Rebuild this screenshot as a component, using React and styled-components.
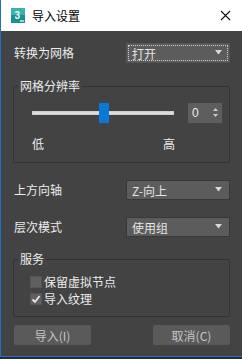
import React, { useState } from 'react';
import styled, { createGlobalStyle } from 'styled-components';

const GlobalStyle = createGlobalStyle`
    html, body {
        margin: 0;
        padding: 0;
        background: #2b2b2b;
    }
    body {
        font-family: "Noto Sans CJK SC", "Liberation Sans", sans-serif;
    }
`

const App = () => {
    const [keepNodes, setKeepNodes] = useState(false)
    const [textures, setTextures] = useState(true)

    return (<Window>
        <GlobalStyle />
        <TitleBar>
            <AppIcon>
                <svg width="14" height="15" viewBox="0 0 14 15">
                    <rect x="0" y="0" width="14" height="15" fill="#1d8f92" />
                    <rect x="0" y="0" width="14" height="7" fill="#3bb2ac" />
                    <text x="3.5" y="11" fontSize="10" fontWeight="bold" fill="#e8f4f4" fontFamily="Liberation Sans">3</text>
                    <rect x="9" y="12" width="4" height="2" fill="#9fd6d4" />
                </svg>
            </AppIcon>
            <Title>导入设置</Title>
            <Close>
                <svg width="11" height="11" viewBox="0 0 11 11">
                    <path d="M1 1 L10 10 M10 1 L1 10" stroke="#111" strokeWidth="1.1" />
                </svg>
            </Close>
        </TitleBar>
        <Body>
            <Row>
                <Label>转换为网格</Label>
                <Select focused>打开<Arrow /></Select>
            </Row>
            <Group>
                <Legend>网格分辨率</Legend>
                <SliderRow>
                    <Track>
                        <Thumb style={{ left: '66px' }} />
                    </Track>
                    <Spinner>
                        0
                        <SpinArrows>
                            <svg width="5" height="9" viewBox="0 0 5 9">
                                <path d="M0 3 L2.5 0 L5 3 Z M0 6 L2.5 9 L5 6 Z" fill="#c8c8c8" />
                            </svg>
                        </SpinArrows>
                    </Spinner>
                </SliderRow>
                <Ticks>
                    <span>低</span>
                    <span>高</span>
                </Ticks>
            </Group>
            <Row top={17}>
                <Label>上方向轴</Label>
                <Select>Z-向上<Arrow /></Select>
            </Row>
            <Row top={17}>
                <Label>层次模式</Label>
                <Select>使用组<Arrow /></Select>
            </Row>
            <Group top={22} short>
                <Legend>服务</Legend>
                <Check onClick={() => setKeepNodes(!keepNodes)}>
                    <Box>{keepNodes && <Tick />}</Box>
                    保留虚拟节点
                </Check>
                <Check onClick={() => setTextures(!textures)}>
                    <Box>{textures && <Tick />}</Box>
                    导入纹理
                </Check>
            </Group>
            <Buttons>
                <Button>导入(I)</Button>
                <Button>取消(C)</Button>
            </Buttons>
        </Body>
    </Window>);
}

const Tick = () => (
    <svg width="10" height="10" viewBox="0 0 10 10">
        <path d="M1.5 5.5 L4 8 L8.5 2" stroke="#e6e6e6" strokeWidth="1.8" fill="none" />
    </svg>
)

const Arrow = () => (
    <ArrowWrap>
        <svg width="7" height="5" viewBox="0 0 7 5">
            <path d="M0 0 H7 L3.5 4.5 Z" fill="#d8d8d8" />
        </svg>
    </ArrowWrap>
)

export default App;

const Window = styled.div`
    width: 242px;
    height: 357px;
    box-sizing: border-box;
    border-left: 1px solid #1a73c8;
    border-bottom: 1px solid #1a73c8;
    background: #434343;
    display: flex;
    flex-direction: column;
    overflow: hidden;
`

const TitleBar = styled.div`
    height: 31px;
    flex: none;
    background: #ffffff;
    display: flex;
    align-items: center;
    padding-left: 10px;
    box-sizing: border-box;
`

const AppIcon = styled.div`
    width: 14px;
    height: 15px;
    display: flex;
`

const Title = styled.div`
    margin-left: 7px;
    font-size: 12px;
    color: #000;
    flex: 1;
`

const Close = styled.div`
    width: 30px;
    display: flex;
    justify-content: center;
    margin-right: 2px;
`

const Body = styled.div`
    flex: 1;
    padding: 12px 12px 0 12px;
    color: #ececec;
    font-size: 12px;
    display: flex;
    flex-direction: column;
`

const Row = styled.div`
    display: flex;
    align-items: center;
    justify-content: space-between;
    margin-top: ${p => (p.top || 0)}px;
    height: 20px;
`

const Label = styled.div`
    padding-left: 1px;
    line-height: 20px;
`

const Select = styled.div`
    width: 104px;
    height: 20px;
    box-sizing: border-box;
    background: #5c5c5c;
    border: 1px solid ${p => (p.focused ? '#545454' : '#383838')};
    outline: ${p => (p.focused ? '1px dotted #cfcfcf' : 'none')};
    outline-offset: -3px;
    display: flex;
    align-items: center;
    padding-left: 5px;
    font-size: 12px;
    color: #e4e4e4;
    position: relative;
`

const ArrowWrap = styled.div`
    position: absolute;
    right: 7px;
    top: 6px;
    display: flex;
`

const Group = styled.div`
    margin-top: ${p => (p.top || 23)}px;
    border: 1px solid #333333;
    border-radius: 2px;
    height: ${p => (p.short ? 58 : 77)}px;
    box-sizing: border-box;
    position: relative;
    padding: ${p => (p.short ? '13px 0 0 16px' : '0')};
`

const Legend = styled.div`
    position: absolute;
    top: -9px;
    left: 4px;
    padding: 0 2px;
    background: #434343;
    line-height: 16px;
    font-size: 12px;
`

const SliderRow = styled.div`
    display: flex;
    align-items: center;
    padding: 16px 0 0 18px;
`

const Track = styled.div`
    width: 142px;
    height: 4px;
    background: #dcdcdc;
    border: 1px solid #cfcfcf;
    box-sizing: border-box;
    position: relative;
`

const Thumb = styled.div`
    position: absolute;
    top: -9px;
    width: 10px;
    height: 20px;
    background: #0a78d7;
`

const Spinner = styled.div`
    margin-left: 14px;
    width: 34px;
    height: 20px;
    background: #5e5e5e;
    display: flex;
    align-items: center;
    padding-left: 4px;
    box-sizing: border-box;
    font-size: 12px;
    font-family: "Liberation Sans", sans-serif;
    position: relative;
`

const SpinArrows = styled.div`
    position: absolute;
    right: 4px;
    top: 5px;
    display: flex;
`

const Ticks = styled.div`
    display: flex;
    justify-content: space-between;
    width: 143px;
    padding-left: 18px;
    margin-top: 12px;
    font-size: 12px;
`

const Check = styled.div`
    display: flex;
    align-items: center;
    height: 17px;
    line-height: 17px;
    cursor: default;
`

const Box = styled.div`
    width: 10px;
    height: 10px;
    flex: none;
    background: #5f5f5f;
    border: 1px solid #555;
    margin-right: 2px;
    display: flex;
    align-items: center;
    justify-content: center;
`

const Buttons = styled.div`
    display: flex;
    justify-content: space-between;
    margin-top: 8px;
    padding-left: 1px;
`

const Button = styled.div`
    width: 77px;
    height: 20px;
    background: #5a5a5a;
    border-radius: 2px;
    display: flex;
    align-items: center;
    justify-content: center;
    font-size: 12px;
    color: #c4c4c4;
`
